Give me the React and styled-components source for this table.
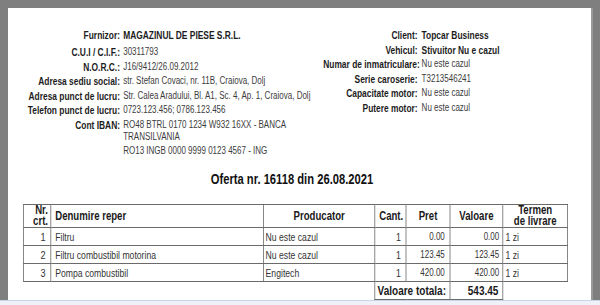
import React from "react";
import styled, { createGlobalStyle } from "styled-components";

const Global = createGlobalStyle`
  html, body { margin: 0; padding: 0; }
  body {
    background: #7f7f7f;
    overflow: hidden;
    font-family: "Liberation Sans", Arial, sans-serif;
  }
`;

const Frame = styled.div`
  display: flex;
  flex-direction: column;
  width: 600px;
  height: 305px;
`;

const Viewport = styled.div`
  display: flex;
  height: 300px;
  padding: 8px 0 0 8px;
  box-sizing: border-box;
`;

const Page = styled.div`
  width: 583px;
  height: 292px;
  background: #ffffff;
  overflow: hidden;
  box-shadow: 2px 0 0 #9a9a9a;
`;

/* The document is printed in a condensed (Arial Narrow-like) face:
   the content is laid out at full width and condensed horizontally. */
const Condensed = styled.div`
  width: 729px;
  padding-top: 21px;
  transform: scaleX(0.8);
  transform-origin: left top;
`;

const BottomBar = styled.div`
  height: 5px;
  background: #eef2f8;
  border-top: 1px solid #c9d6e6;
  box-sizing: border-box;
`;

const InfoRow = styled.div`
  display: flex;
  align-items: flex-start;
`;

const InfoGrid = styled.div`
  display: grid;
  grid-template-columns: ${(p) => p.$label}px ${(p) => p.$value}px;
  column-gap: ${(p) => p.$gap}px;
  row-gap: 2.5px;
  margin-left: ${(p) => p.$offset}px;
  line-height: 12px;
`;

const Label = styled.div`
  text-align: right;
  font-weight: bold;
  font-size: 10.5px;
  color: #1c1c1c;
  white-space: nowrap;
  margin-bottom: ${(p) => (p.$extra ? "2.5px" : "0")};
`;

const Value = styled.div`
  font-size: ${(p) => (p.$strong ? "10.5px" : "10px")};
  font-weight: ${(p) => (p.$strong ? "bold" : "normal")};
  color: ${(p) => (p.$strong ? "#1c1c1c" : "#3c3c3c")};
  margin-bottom: ${(p) => (p.$extra ? "2.5px" : "0")};
`;

const Title = styled.h1`
  margin: 14px 0 0 19px;
  width: 672px;
  text-align: center;
  font-size: 14px;
  line-height: 16px;
  font-weight: bold;
  color: #111;
`;

const Table = styled.table`
  margin: 17px 0 0 19px;
  width: 680px;
  border-collapse: collapse;
  table-layout: fixed;
  color: #2a2a2a;
`;

const Th = styled.th`
  border: 1px solid #6a6a6a;
  height: 21px;
  padding: 0 ${(p) => (p.$align === "right" ? "3px" : "5px")} 0 5px;
  font-size: 12px;
  line-height: 11px;
  font-weight: bold;
  color: #1a1a1a;
  text-align: ${(p) => p.$align || "center"};
  vertical-align: middle;
`;

const Td = styled.td`
  border: ${(p) => (p.$blank ? "none" : "1px solid #6a6a6a")};
  height: 17px;
  padding: 0 ${(p) => p.$pr ?? 5}px 0 ${(p) => p.$pl ?? 5}px;
  font-size: ${(p) => (p.$bold ? "12.5px" : p.$size || "10px")};
  font-weight: ${(p) => (p.$bold ? "bold" : "normal")};
  color: ${(p) => (p.$bold ? "#1a1a1a" : "#333")};
  text-align: ${(p) => p.$align || "left"};
  vertical-align: middle;
  white-space: nowrap;
`;

const supplier = [
  ["Furnizor:", "MAGAZINUL DE PIESE S.R.L.", true],
  ["C.U.I / C.I.F.:", "30311793"],
  ["N.O.R.C.:", "J16/9412/26.09.2012"],
  ["Adresa sediu social:", "str. Stefan Covaci, nr. 11B, Craiova, Dolj"],
  ["Adresa punct de lucru:", "Str. Calea Aradului, Bl. A1, Sc. 4, Ap. 1, Craiova, Dolj"],
  ["Telefon punct de lucru:", "0723.123.456; 0786.123.456"],
  ["Cont IBAN:", "RO48 BTRL 0170 1234 W932 16XX - BANCA TRANSILVANIA"],
  ["", "RO13 INGB 0000 9999 0123 4567 - ING"],
];

const client = [
  ["Client:", "Topcar Business", true],
  ["Vehicul:", "Stivuitor Nu e cazul", true],
  ["Numar de inmatriculare:", "Nu este cazul"],
  ["Serie caroserie:", "T3213546241"],
  ["Capacitate motor:", "Nu este cazul"],
  ["Putere motor:", "Nu este cazul"],
];

const items = [
  { nr: 1, name: "Filtru", prod: "Nu este cazul", qty: 1, price: "0.00", val: "0.00", term: "1 zi" },
  { nr: 2, name: "Filtru combustibil motorina", prod: "Nu este cazul", qty: 1, price: "123.45", val: "123.45", term: "1 zi" },
  { nr: 3, name: "Pompa combustibil", prod: "Engitech", qty: 1, price: "420.00", val: "420.00", term: "1 zi" },
];

const widths = [34, 266, 139, 39, 55, 66, 81];

export default function App() {
  return (
    <>
      <Global />
      <Frame>
        <Viewport>
          <Page>
            <Condensed>
              <InfoRow>
                <InfoGrid $label={132} $value={250} $gap={4} $offset={8}>
                  {supplier.map(([l, v, s], i) => (
                    <React.Fragment key={i}>
                      <Label $extra={i === 0}>{l}</Label>
                      <Value $strong={s} $extra={i === 0}>{v}</Value>
                    </React.Fragment>
                  ))}
                </InfoGrid>
                <InfoGrid $label={118} $value={180} $gap={5} $offset={0}>
                  {client.map(([l, v, s], i) => (
                    <React.Fragment key={i}>
                      <Label>{l}</Label>
                      <Value $strong={s}>{v}</Value>
                    </React.Fragment>
                  ))}
                </InfoGrid>
              </InfoRow>
              <Title>Oferta nr. 16118 din 26.08.2021</Title>
              <Table>
                <colgroup>
                  {widths.map((w, i) => (
                    <col key={i} style={{ width: w }} />
                  ))}
                </colgroup>
                <thead>
                  <tr>
                    <Th $align="right">Nr.<br />crt.</Th>
                    <Th $align="left">Denumire reper</Th>
                    <Th>Producator</Th>
                    <Th>Cant.</Th>
                    <Th>Pret</Th>
                    <Th>Valoare</Th>
                    <Th>Termen<br />de livrare</Th>
                  </tr>
                </thead>
                <tbody>
                  {items.map((it) => (
                    <tr key={it.nr}>
                      <Td $align="right" $size="11.5px" $pr={6}>{it.nr}</Td>
                      <Td $size="10.8px">{it.name}</Td>
                      <Td $size="10.8px" $pl={2}>{it.prod}</Td>
                      <Td $align="right" $size="11px" $pr={6}>{it.qty}</Td>
                      <Td $align="right" $pr={6}>{it.price}</Td>
                      <Td $align="right" $pr={4}>{it.val}</Td>
                      <Td $size="10.8px" $pl={3}>{it.term}</Td>
                    </tr>
                  ))}
                  <tr>
                    <Td $blank colSpan={3} />
                    <Td $bold colSpan={2} $pl={3} $pr={2}>Valoare totala:</Td>
                    <Td $bold $align="right" $pr={5}>543.45</Td>
                    <Td $blank />
                  </tr>
                </tbody>
              </Table>
            </Condensed>
          </Page>
        </Viewport>
        <BottomBar />
      </Frame>
    </>
  );
}
